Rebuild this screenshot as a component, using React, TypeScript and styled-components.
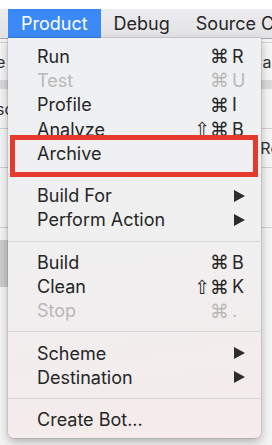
import styled, { createGlobalStyle } from 'styled-components';

const GlobalStyle = createGlobalStyle`
  html, body {
    margin: 0;
    padding: 0;
    background: #ffffff;
  }
  #root {
    width: 272px;
    height: 445px;
    overflow: hidden;
  }
`;

const font = `"Inter", "DejaVu Sans", sans-serif`;

const Screen = styled.div`
  width: 272px;
  height: 445px;
  display: flex;
  flex-direction: column;
  font-family: ${font};
  overflow: hidden;
`;

const TopGap = styled.div`
  height: 9px;
  background: #ffffff;
  flex-shrink: 0;
`;

const MenuBar = styled.div`
  height: 29px;
  flex-shrink: 0;
  display: flex;
  align-items: stretch;
  background: linear-gradient(180deg, #ececee, #e3e3e6);
  white-space: nowrap;
`;

const BarLeftEdge = styled.div`
  width: 8px;
  flex-shrink: 0;
`;

const BarItem = styled.div<{ $active?: boolean }>`
  display: flex;
  align-items: center;
  padding: 0 13px;
  font-size: 18px;
  color: ${(p) => (p.$active ? '#ffffff' : '#262626')};
  background: ${(p) => (p.$active ? '#3b89f6' : 'transparent')};
  flex-shrink: 0;
`;

const Window = styled.div`
  position: relative;
  flex: 1;
  background: #f4f4f4;
  border-top: 1px solid #a9a9a9;
  display: flex;
  flex-direction: column;
`;

const BgRow = styled.div<{ $h: number; $line?: boolean; $band?: boolean }>`
  height: ${(p) => p.$h}px;
  flex-shrink: 0;
  display: flex;
  align-items: center;
  justify-content: space-between;
  border-bottom: ${(p) => (p.$line ? '1px solid #d2d2d2' : 'none')};
  background: ${(p) => (p.$band ? '#d9d9d9' : 'transparent')};
  font-size: 16px;
  color: #333;
  overflow: hidden;
  white-space: nowrap;
`;

const LeftSnip = styled.span`
  margin-left: -4px;
`;

const RightSnip = styled.span`
  margin-right: -8px;
`;

const GrayBlock = styled.div`
  width: 8px;
  height: 47px;
  background: #cbcbcb;
  margin-top: 12px;
`;

const Menu = styled.div`
  position: absolute;
  top: -1px;
  left: 8px;
  width: 253px;
  box-sizing: border-box;
  padding: 6px 0;
  background: linear-gradient(172deg, #eef0f3 0%, #f0f0f1 45%, #f3eded 80%, #f5ebea 100%);
  border-radius: 0 0 6px 6px;
  box-shadow: 0 4px 10px rgba(0, 0, 0, 0.28), 0 0 0 0.5px rgba(0, 0, 0, 0.18);
`;

const Item = styled.div<{ $disabled?: boolean }>`
  height: 24.3px;
  display: flex;
  align-items: center;
  padding: 0 14px 0 29px;
  font-size: 18px;
  color: ${(p) => (p.$disabled ? '#b8b8b8' : '#262626')};
`;

const Label = styled.span`
  flex: 1;
`;

const Mods = styled.span`
  font-family: "DejaVu Sans", sans-serif;
  font-size: 19px;
  text-align: right;
`;

const Key = styled.span`
  width: 15px;
  margin-left: 3px;
  font-size: 18px;
`;

const Arrow = styled.svg`
  width: 11px;
  height: 12px;
  margin-right: 2px;
`;

const Separator = styled.div`
  height: 18px;
  display: flex;
  align-items: center;

  &::after {
    content: '';
    flex: 1;
    height: 1px;
    background: #d7d6d6;
  }
`;

const Highlight = styled.div`
  position: absolute;
  left: 2px;
  top: 97px;
  width: 248px;
  height: 42px;
  box-sizing: border-box;
  border: 5px solid #e63a2e;
`;

type Entry =
  | { sep: true }
  | { label: string; mods?: string; key?: string; disabled?: boolean; sub?: boolean };

const entries: Entry[] = [
  { label: 'Run', mods: '⌘', key: 'R' },
  { label: 'Test', mods: '⌘', key: 'U', disabled: true },
  { label: 'Profile', mods: '⌘', key: 'I' },
  { label: 'Analyze', mods: '⇧⌘', key: 'B' },
  { label: 'Archive' },
  { sep: true },
  { label: 'Build For', sub: true },
  { label: 'Perform Action', sub: true },
  { sep: true },
  { label: 'Build', mods: '⌘', key: 'B' },
  { label: 'Clean', mods: '⇧⌘', key: 'K' },
  { label: 'Stop', mods: '⌘', key: '.', disabled: true },
  { sep: true },
  { label: 'Scheme', sub: true },
  { label: 'Destination', sub: true },
  { sep: true },
  { label: 'Create Bot...' },
];

export default function App() {
  return (
    <Screen>
      <GlobalStyle />
      <TopGap />
      <MenuBar>
        <BarLeftEdge />
        <BarItem $active>Product</BarItem>
        <BarItem>Debug</BarItem>
        <BarItem>Source Control</BarItem>
      </MenuBar>
      <Window>
        <BgRow $h={3} $line />
        <BgRow $h={37}>
          <LeftSnip>e</LeftSnip>
          <RightSnip>as</RightSnip>
        </BgRow>
        <BgRow $h={9} $band />
        <BgRow $h={39} $line>
          <LeftSnip>sc</LeftSnip>
        </BgRow>
        <BgRow $h={38} $line>
          <span />
          <RightSnip>Ro</RightSnip>
        </BgRow>
        <BgRow $h={59} $line />
        <GrayBlock />
        <Menu>
          {entries.map((e, i) =>
            'sep' in e ? (
              <Separator key={i} />
            ) : (
              <Item key={i} $disabled={e.disabled}>
                <Label>{e.label}</Label>
                {e.key && (
                  <>
                    <Mods>{e.mods}</Mods>
                    <Key>{e.key}</Key>
                  </>
                )}
                {e.sub && (
                  <Arrow viewBox="0 0 11 12">
                    <path d="M0 0 L11 6 L0 12 Z" fill="#2d2d2d" />
                  </Arrow>
                )}
              </Item>
            )
          )}
          <Highlight />
        </Menu>
      </Window>
    </Screen>
  );
}
